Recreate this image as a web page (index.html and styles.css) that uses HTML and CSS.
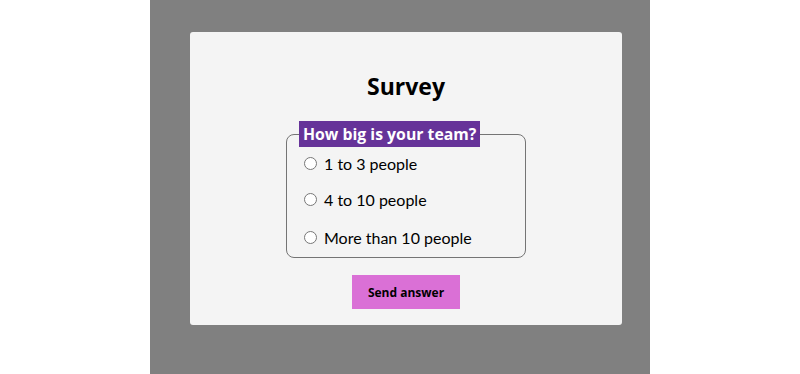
FILE: index.html
```html
<!doctype html>
<html lang="en">
    <head>
        <meta charset="utf-8">
        <title>Survey</title>
        <meta name="viewport" content="width=device-width, initial-scale=1">
        <link rel="stylesheet" href="styles.css">
    </head>
    <body>
        <div class="page">
            <form class="card">
                <h1 class="title">Survey</h1>

                <fieldset class="question">
                    <legend class="label">How big is your team?</legend>

                    <label class="option">
                        <input type="radio" name="team" value="small">
                        1 to 3 people
                    </label>

                    <label class="option">
                        <input type="radio" name="team" value="medium">
                        4 to 10 people
                    </label>

                    <label class="option">
                        <input type="radio" name="team" value="large">
                        More than 10 people
                    </label>
                </fieldset>

                <button class="send" type="button">Send answer</button>
            </form>
        </div>
    </body>
</html>
```

FILE: styles.css
```css
html {
    background-color: #fff;
}

body {
    margin: 0;
    font-family: "Segoe UI", Lato, "Noto Sans", sans-serif;
    color: #000;
}

.page {
    box-sizing: border-box;
    width: 500px;
    min-height: 100vh;
    margin: 0 auto;
    padding: 32px 28px 32px 40px;
    background-color: #808080;
}

.card {
    display: flex;
    flex-direction: column;
    align-items: center;
    height: 293px;
    box-sizing: border-box;
    padding-top: 38px;
    background-color: #f4f4f4;
    border-radius: 3px;
}

.title {
    margin: 0 0 19px 0;
    font-family: "Open Sans", sans-serif;
    font-size: 23px;
    line-height: 32px;
    font-weight: bold;
}

.question {
    box-sizing: border-box;
    width: 240px;
    margin: 0;
    padding: 5px 12px 9px 12px;
    border: 1.5px solid #747474;
    border-radius: 8px;
}

.question .label {
    padding: 0 4px;
    height: 26px;
    line-height: 26px;
    background-color: #663399;
    color: #fff;
    font-family: "Open Sans", sans-serif;
    font-size: 15.8px;
    font-weight: bold;
}

.option {
    display: flex;
    align-items: center;
    height: 22px;
    font-size: 16px;
}

.option + .option {
    margin-top: 14px;
}

.option + .option + .option {
    margin-top: 16px;
}

.option input {
    margin: 0 7px 0 5px;
}

.send {
    margin-top: 17px;
    height: 34px;
    padding: 0 16px;
    border: none;
    background-color: #da70d6;
    color: #000;
    font-family: "Open Sans", sans-serif;
    font-size: 12px;
    font-weight: bold;
}
```
